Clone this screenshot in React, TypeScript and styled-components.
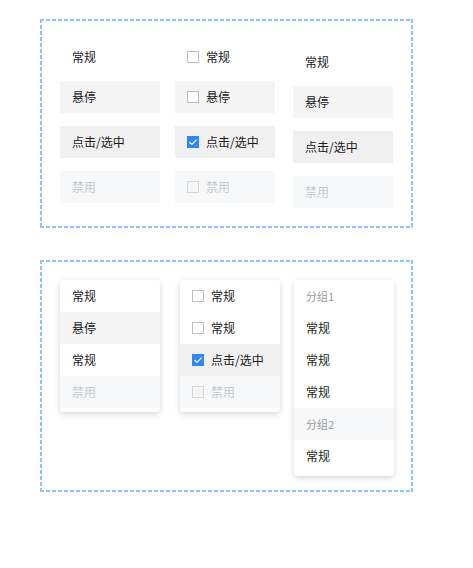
import React from "react";
import styled, { createGlobalStyle } from "styled-components";

const dash = "#8fc0ff";

const GlobalStyle = createGlobalStyle`
  body {
    margin: 0;
    background: #ffffff;
    font-family: "Noto Sans CJK SC", "Noto Sans", sans-serif;
    color: #1a1a1a;
  }
`;

const Page = styled.div`
  width: 473px;
  height: 568px;
  padding: 19px 0 0 40px;
  box-sizing: border-box;
  display: flex;
  flex-direction: column;
  gap: 32px;
`;

// dashed frame drawn with gradients to get 4px dashes / 2px gaps
const Frame = styled.div<{ $height: number; $padTop: number }>`
  width: 373px;
  height: ${(p) => p.$height}px;
  box-sizing: border-box;
  padding: ${(p) => p.$padTop}px 0 0 20px;
  background:
    linear-gradient(90deg, ${dash} 4px, transparent 4px) 0 0 / 6px 2px repeat-x,
    linear-gradient(90deg, ${dash} 4px, transparent 4px) 0 100% / 6px 2px repeat-x,
    linear-gradient(180deg, ${dash} 4px, transparent 4px) 0 0 / 2px 6px repeat-y,
    linear-gradient(180deg, ${dash} 4px, transparent 4px) 100% 0 / 2px 6px repeat-y;
`;

const Row = styled.div<{ $gap: number }>`
  display: flex;
  align-items: flex-start;
  gap: ${(p) => p.$gap}px;
`;

const Column = styled.div<{ $top?: number; $left?: number }>`
  width: 100px;
  display: flex;
  flex-direction: column;
  gap: 13px;
  margin-top: ${(p) => p.$top || 0}px;
  margin-left: ${(p) => p.$left || 0}px;
`;

type State = "normal" | "hover" | "active" | "disabled";

const bgFor = (s: State) =>
  s === "hover" ? "#f5f5f5" : s === "active" ? "#f0f0f0" : s === "disabled" ? "#f7f8fa" : "transparent";

const Item = styled.div<{ $state: State; $plain?: boolean }>`
  height: ${(p) => (p.$plain ? 22 : 32)}px;
  padding: 0 12px;
  display: flex;
  align-items: center;
  gap: 7px;
  font-size: 12px;
  line-height: 1;
  background: ${(p) => bgFor(p.$state)};
  color: ${(p) => (p.$state === "disabled" ? "#c5c8ce" : "#1a1a1a")};
`;

const Menu = styled.div<{ $left?: number }>`
  width: 100px;
  background: #fff;
  border-radius: 4px;
  padding-bottom: 4px;
  overflow: hidden;
  box-shadow: 0 2px 6px rgba(0, 0, 0, 0.16);
  margin-left: ${(p) => p.$left || 0}px;
`;

const GroupLabel = styled.div<{ $shaded?: boolean }>`
  height: 32px;
  padding: 0 12px;
  display: flex;
  align-items: center;
  font-size: 11px;
  color: #999;
  background: ${(p) => (p.$shaded ? "#f7f8fa" : "transparent")};
`;

const Box = styled.span<{ $checked?: boolean; $disabled?: boolean }>`
  width: 12px;
  height: 12px;
  box-sizing: border-box;
  flex: none;
  border: 1px solid ${(p) => (p.$checked ? "#2f86f6" : p.$disabled ? "#d6d6d6" : "#bdbdbd")};
  background: ${(p) => (p.$checked ? "#2f86f6" : p.$disabled ? "#f5f5f5" : "#fff")};
  display: flex;
  align-items: center;
  justify-content: center;
`;

function Check({ checked, disabled }: { checked?: boolean; disabled?: boolean }) {
  return (
    <Box $checked={checked} $disabled={disabled}>
      {checked && (
        <svg width="10" height="10" viewBox="0 0 10 10">
          <path d="M1.5 5.2 L4 7.5 L8.6 2.6" fill="none" stroke="#fff" strokeWidth="1.2" />
        </svg>
      )}
    </Box>
  );
}

export default function App() {
  return (
    <>
      <GlobalStyle />
      <Page>
        <Frame $height={209} $padTop={27}>
          <Row $gap={15}>
            <Column>
              <Item $state="normal" $plain>常规</Item>
              <Item $state="hover">悬停</Item>
              <Item $state="active">点击/选中</Item>
              <Item $state="disabled">禁用</Item>
            </Column>
            <Column>
              <Item $state="normal" $plain>
                <Check />常规
              </Item>
              <Item $state="hover">
                <Check />悬停
              </Item>
              <Item $state="active">
                <Check checked />点击/选中
              </Item>
              <Item $state="disabled">
                <Check disabled />禁用
              </Item>
            </Column>
            <Column $top={5} $left={3}>
              <Item $state="normal" $plain>常规</Item>
              <Item $state="hover">悬停</Item>
              <Item $state="active">点击/选中</Item>
              <Item $state="disabled">禁用</Item>
            </Column>
          </Row>
        </Frame>

        <Frame $height={232} $padTop={20}>
          <Row $gap={20}>
            <Menu>
              <Item $state="normal">常规</Item>
              <Item $state="hover">悬停</Item>
              <Item $state="normal">常规</Item>
              <Item $state="disabled">禁用</Item>
            </Menu>
            <Menu>
              <Item $state="normal">
                <Check />常规
              </Item>
              <Item $state="normal">
                <Check />常规
              </Item>
              <Item $state="active">
                <Check checked />点击/选中
              </Item>
              <Item $state="disabled">
                <Check disabled />禁用
              </Item>
            </Menu>
            <Menu $left={-6}>
              <GroupLabel>分组1</GroupLabel>
              <Item $state="normal">常规</Item>
              <Item $state="normal">常规</Item>
              <Item $state="normal">常规</Item>
              <GroupLabel $shaded>分组2</GroupLabel>
              <Item $state="normal">常规</Item>
            </Menu>
          </Row>
        </Frame>
      </Page>
    </>
  );
}
